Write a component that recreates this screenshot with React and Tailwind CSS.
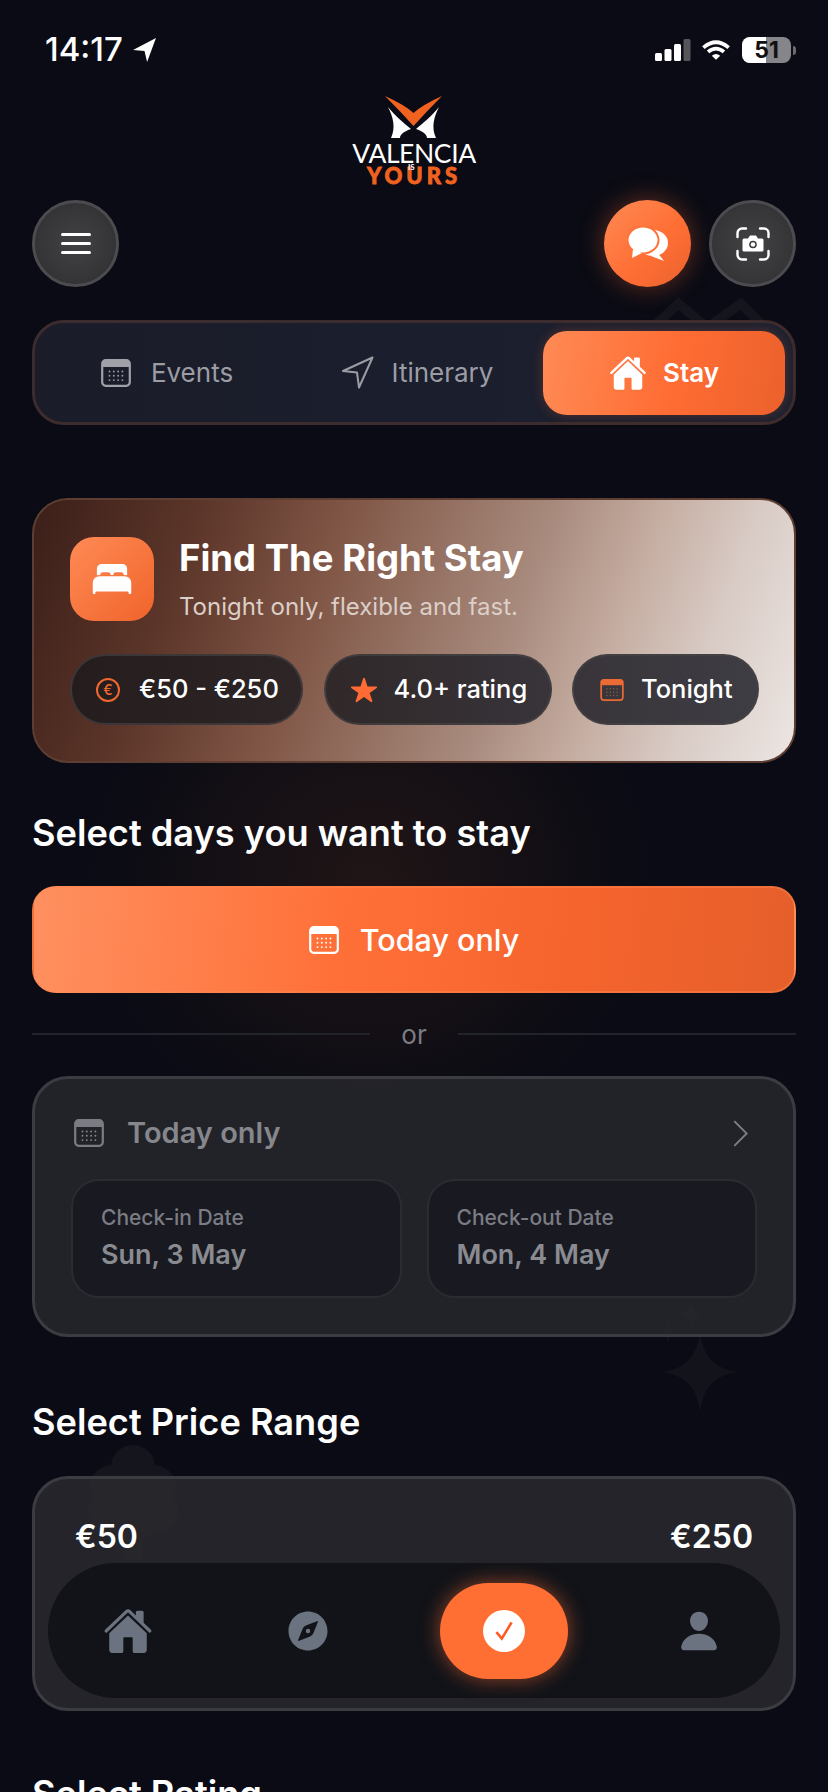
import React from "react";
import { IoHome, IoBed, IoCompass, IoPerson, IoStar } from "react-icons/io5";

const Calendar = ({ className = "", dot = "#888", body = "currentColor" }) => (
  <svg viewBox="0 0 30 28" className={className} fill="none">
    <rect x="1.200" y="1.200" width="27.600" height="25.600" rx="3.500" stroke={body} strokeWidth="2.200" />
    <path d="M1.200 8V4.700A3.500 3.500 0 0 1 4.700 1.200h20.600a3.500 3.500 0 0 1 3.500 3.500V8z" fill={body} />
    {[12.5, 16.8, 21.1].map((y) =>
      [8, 12.3, 16.6, 20.9].map((x) => <circle key={x + "-" + y} cx={x + 0.5} cy={y} r="0.95" fill={dot} />)
    )}
  </svg>
);

const Logo = () => (
  <div className="flex flex-col items-center h-[88px] -mt-[3px]">
    <svg viewBox="384 95 60 46" className="w-[60px] h-[46px] shrink-0">
      <path d="M385 97Q405 106 413.500 114Q422 106 442 97Q427 112 413.500 127Q400 112 385 97Z" fill="#f0621f" />
      <path d="M388 108C396 118 404 124 411 130C405 132 400 135 400 139L391 139C396 128 393 118 388 108Z" fill="#fff" />
      <path d="M439 108C431 118 423 124 416 130C422 132 427 135 427 139L436 139C431 128 434 118 439 108Z" fill="#fff" />
    </svg>
    <div className="relative h-[42px] w-[130px] text-center font-['Lato',sans-serif]">
      <div className="text-white text-[26.500px] leading-[25px] tracking-[-0.4px] font-normal whitespace-nowrap mt-[1px]">VALENCIA</div>
      <div className="text-[#f0621f] text-[22px] leading-[18px] tracking-[4px] font-black whitespace-nowrap mt-[1px] [-webkit-text-stroke:0.8px_#f0621f]">YOURS</div>
      <div className="absolute left-[59px] top-[23px] text-white text-[8px] leading-[8px] font-bold">IS</div>
    </div>
  </div>
);

const RoundBtn = ({ children, className = "" }) => (
  <button className={"w-[87px] h-[87px] rounded-full flex items-center justify-center " + className}>{children}</button>
);

const Title = ({ children, className = "" }) => (
  <h2 className={"text-white text-[36.200px] leading-[44px] font-semibold " + className}>{children}</h2>
);

const Chip = ({ icon, label, className = "" }) => (
  <div className={"h-[71px] rounded-full flex items-center border-2 border-[#4a4648]/60 text-white text-[25.500px] font-medium " + className}>
    {icon}
    <span>{label}</span>
  </div>
);

const DateBox = ({ label, value }) => (
  <div className="flex-1 h-[119px] rounded-[28px] bg-[#181921] border-2 border-[#2b2c32] pl-[28px] pt-[22px]">
    <div className="text-[#7b7c84] text-[21px] leading-[30px] font-medium">{label}</div>
    <div className="text-[#8a8b91] text-[27px] leading-[38px] mt-[3px] font-semibold">{value}</div>
  </div>
);

export default function App() {
  return (
    <div className="relative w-[828px] h-[1792px] overflow-hidden bg-[#0a0b14] font-['Inter',sans-serif]">
      {/* ambient decoration */}
      <div className="absolute left-[90px] top-[620px] w-[560px] h-[520px] rounded-full bg-[radial-gradient(closest-side,rgba(120,60,30,0.2),rgba(120,60,30,0))]" />
      <svg viewBox="0 0 110 40" className="absolute left-[640px] top-[294px] w-[132px] h-[48px]" fill="none" stroke="#14151d" strokeWidth="8">
        <path d="M4 34L32 8L56 28L84 8L106 30" />
      </svg>
      <svg viewBox="660 1300 82 112" className="absolute left-[660px] top-[1300px] w-[82px] h-[112px]" fill="#13141b">
        <path d="M700 1332Q704 1368 738 1372Q704 1376 700 1412Q696 1376 662 1372Q696 1368 700 1332Z" />
        <path d="M691 1300Q693 1312 701 1314Q693 1316 691 1328Q689 1316 681 1314Q689 1312 691 1300Z" />
        <path d="M668 1320Q669 1330 675 1332Q669 1334 668 1344Q667 1334 661 1332Q667 1330 668 1320Z" />
      </svg>
      <svg viewBox="0 0 90 115" className="absolute left-[88px] top-[1445px] w-[90px] h-[115px]" fill="#15161d">
        <circle cx="45" cy="22" r="22" /><circle cx="24" cy="42" r="22" /><circle cx="66" cy="42" r="22" /><circle cx="22" cy="66" r="22" /><circle cx="68" cy="66" r="22" /><circle cx="45" cy="70" r="26" />
        <rect x="36" y="80" width="18" height="35" />
      </svg>
      <div className="absolute left-[58px] top-[505px] w-[58px] h-[80px] rounded-full bg-[#000]/10" />

      {/* content */}
      <div className="relative px-[32px]">
        {/* status bar */}
        <div className="h-[97px] relative">
          <div className="absolute left-[13px] top-[30px] flex items-center gap-[9px] text-white text-[33px] leading-[38px] font-medium">
            <span>14:17</span>
            <svg viewBox="0 0 24 24" className="w-[25px] h-[25px]" fill="#fff"><path d="M23 1L1 12.500L12 13.500L14.500 24Z" /></svg>
          </div>
          <div className="absolute right-[0px] top-[37px] flex items-center">
            <svg viewBox="0 0 38 24" className="w-[38px] h-[24px]">
              <rect x="1" y="15" width="7" height="8" rx="1.500" fill="#fff" />
              <rect x="10.500" y="11" width="7" height="12" rx="1.500" fill="#fff" />
              <rect x="20" y="6" width="7" height="17" rx="1.500" fill="#fff" />
              <rect x="29.500" y="1" width="7" height="22" rx="1.500" fill="#55555a" />
            </svg>
            <svg viewBox="0 0 32 24" className="w-[30px] h-[24px] ml-[9px]" fill="none" stroke="#fff" strokeWidth="4">
              <path d="M2.500 9.500Q16 -2 29.500 9.500" />
              <path d="M7.500 14Q16 7 24.500 14" />
              <path d="M16 22.500L11.500 18Q16 14.500 20.500 18Z" fill="#fff" stroke="none" />
            </svg>
            <div className="relative ml-[11px] w-[49px] h-[26px] rounded-[8px] bg-[#85858a] text-[#111] text-[23px] leading-[26px] font-bold text-center">
              <div className="absolute left-0 top-0 w-[24px] h-full rounded-l-[8px] bg-white" />
              <span className="relative">51</span>
            </div>
            <div className="w-[3px] h-[9px] ml-[2px] rounded-r-full bg-[#6a6a6e]" />
          </div>
        </div>

        <Logo />

        {/* top actions */}
        <div className="flex items-center mt-[18px]">
          <RoundBtn className="bg-[radial-gradient(circle,#424244_0%,#353537_65%,#29292b_100%)] border-[3px] border-[#4c4c50]">
            <svg viewBox="0 0 30 22" className="w-[30px] h-[22px]" fill="#fff">
              <rect y="0" width="30" height="3" rx="1.500" /><rect y="9" width="30" height="3" rx="1.500" /><rect y="18" width="30" height="3" rx="1.500" />
            </svg>
          </RoundBtn>
          <RoundBtn className="ml-auto bg-[linear-gradient(135deg,#ff8a55,#ff6f35_55%,#ea622d)] shadow-[0_0_26px_rgba(255,107,53,0.38)]">
            <svg viewBox="0 0 42 36" className="w-[42px] h-[36px]" fill="#fff">
              <ellipse cx="26" cy="17" rx="15" ry="13" />
              <path d="M30 26L37 35L24 30Z" />
              <g stroke="#ff7238" strokeWidth="2">
                <ellipse cx="16" cy="14" rx="15.500" ry="13.500" />
              </g>
              <path d="M6 23L5 32L15 27Z" />
            </svg>
          </RoundBtn>
          <RoundBtn className="ml-[18px] bg-[radial-gradient(circle,#424244_0%,#363638_65%,#29292b_100%)] border-[3px] border-[#4c4c50]">
            <svg viewBox="0 0 34 34" className="w-[34px] h-[34px]" fill="none">
              <path d="M1.500 10V6a4.500 4.500 0 0 1 4.500-4.500h4M24 1.500h4A4.500 4.500 0 0 1 32.500 6v4M32.500 24v4a4.500 4.500 0 0 1-4.500 4.500h-4M10 32.500H6A4.500 4.500 0 0 1 1.500 28v-4" stroke="#fff" strokeWidth="2.400" strokeLinecap="round" />
              <path d="M8 11.500h4l2-3h6l2 3h4a1.500 1.500 0 0 1 1.500 1.500v10a1.500 1.500 0 0 1-1.500 1.500H8A1.500 1.500 0 0 1 6.500 23V13A1.500 1.500 0 0 1 8 11.500z" fill="#fff" />
              <circle cx="17" cy="17.500" r="3.800" fill="#3a3a3c" /><circle cx="17" cy="17.500" r="2.300" fill="#fff" />
            </svg>
          </RoundBtn>
        </div>

        {/* tabs */}
        <div className="mt-[33px] h-[105px] rounded-[32px] border-[3px] border-[#3d2c2d] bg-[linear-gradient(90deg,#1a1c29,#1c2030)] flex items-center p-[8px]">
          <div className="w-[248px] flex items-center justify-center gap-[20px] text-[#9c9da4] text-[26px] font-normal shrink-0">
            <Calendar className="w-[30px] h-[28px]" body="#a0a1a8" dot="#9a9ba2" />
            <span>Events</span>
          </div>
          <div className="flex-1 flex items-center justify-center gap-[18px] text-[#9c9da4] text-[26px] font-normal">
            <svg viewBox="0 0 33 33" className="w-[33px] h-[33px]" fill="none" stroke="#9c9da4" strokeWidth="2" strokeLinejoin="round"><path d="M31.500 1.500L2 15L16 16.500L18 31.500Z" /></svg>
            <span>Itinerary</span>
          </div>
          <div className="w-[242px] h-[84px] rounded-[24px] bg-[linear-gradient(100deg,#ff8a55,#ff6c33_55%,#eb612c)] flex items-center justify-center gap-[16px] text-white text-[26px] font-semibold shadow-[0_0_12px_rgba(255,107,53,0.25)] shrink-0">
            <IoHome className="w-[38px] h-[38px]" />
            <span>Stay</span>
          </div>
        </div>

        {/* hero */}
        <div className="mt-[73px] h-[265px] rounded-[36px] border-2 border-[#5e3e32] bg-[linear-gradient(110deg,#3b1f19_0%,#5a3428_19%,#805646_37%,#a98c7f_62%,#c4ab9f_73%,#d8cac4_85%,#ece6e3_100%)] pl-[36px] pr-[35px] pt-[37px]">
          <div className="flex">
            <div className="w-[84px] h-[84px] rounded-[24px] bg-[linear-gradient(135deg,#ff8a55,#f0642b)] flex items-center justify-center shrink-0">
              <IoBed className="w-[44px] h-[44px] text-white" />
            </div>
            <div className="ml-[25px]">
              <div className="text-white text-[36.500px] leading-[44px] font-bold -mt-[1px]">Find The Right Stay</div>
              <div className="text-[#dccfc8] text-[24px] leading-[30px] mt-[12px] font-normal">Tonight only, flexible and fast.</div>
            </div>
          </div>
          <div className="flex mt-[32px] justify-between">
            <Chip className="w-[233px] pl-[24px] bg-[linear-gradient(90deg,#251c1d,#2e2526)]" label="€50 - €250"
              icon={<span className="w-[24px] h-[24px] rounded-full border-2 border-[#f0682f] text-[#f0682f] text-[14px] leading-[20px] text-center mr-[19px]">€</span>} />
            <Chip className="w-[228px] pl-[24px] bg-[linear-gradient(90deg,#302829,#38343a)]" label="4.0+ rating"
              icon={<IoStar className="w-[28px] h-[28px] text-[#ff6b35] mr-[16px]" />} />
            <Chip className="w-[187px] pl-[26px] bg-[linear-gradient(90deg,#38343a,#3e3d43)]" label="Tonight"
              icon={<Calendar className="w-[24px] h-[22px] mr-[17px]" body="#ec6a33" dot="#8a5a44" />} />
          </div>
        </div>

        <Title className="mt-[48px]">Select days you want to stay</Title>

        {/* primary */}
        <button className="mt-[31px] w-full h-[107px] rounded-[24px] border-2 border-[#ff8a55]/40 bg-[linear-gradient(95deg,#ff9060,#ff7038_40%,#f6642d_70%,#e55f2b)] flex items-center justify-center gap-[21px] text-white text-[30.500px] font-medium">
          <Calendar className="w-[30px] h-[28px]" body="#fff" dot="#fff" />
          <span>Today only</span>
        </button>

        {/* or */}
        <div className="flex items-center mt-[23px] h-[36px]">
          <div className="flex-1 h-[2px] bg-[#22242c]" />
          <div className="w-[88px] text-center text-[#7b7c84] text-[26px]">or</div>
          <div className="flex-1 h-[2px] bg-[#22242c]" />
        </div>

        {/* date card */}
        <div className="mt-[24px] h-[261px] rounded-[36px] border-[3px] border-[#3b3c42] bg-[#28292e]/80 px-[37px] pt-[34px]">
          <div className="flex items-center h-[40px] text-[#86878d]">
            <Calendar className="w-[30px] h-[28px] ml-[2px]" body="#7b7c83" dot="#85868c" />
            <span className="ml-[23px] text-[29px] font-semibold">Today only</span>
            <svg viewBox="0 0 14 26" className="w-[15px] h-[27px] ml-auto mr-[8px]" fill="none" stroke="#7e7f86" strokeWidth="1.800"><path d="M1 1l12 12L1 25" /></svg>
          </div>
          <div className="flex gap-[25px] mt-[26px] -mx-[1px]">
            <DateBox label="Check-in Date" value="Sun, 3 May" />
            <DateBox label="Check-out Date" value="Mon, 4 May" />
          </div>
        </div>

        <Title className="mt-[63px]">Select Price Range</Title>

        {/* price card */}
        <div className="mt-[32px] h-[235px] rounded-[36px] border-[3px] border-[#3b3c42] bg-[#2a2b30]/80 px-[40px] pt-[38px]">
          <div className="flex justify-between text-white text-[32px] leading-[40px] font-semibold">
            <span>€50</span><span>€250</span>
          </div>
        </div>

        <Title className="mt-[61px]">Select Rating</Title>
      </div>

      {/* bottom nav */}
      <div className="absolute left-[48px] top-[1563px] w-[732px] h-[135px] rounded-[68px] bg-[#111318] flex items-center">
        <div className="w-[160px] flex justify-center"><IoHome className="w-[50px] h-[50px] text-[#6b7280]" /></div>
        <div className="w-[200px] flex justify-center"><IoCompass className="w-[48px] h-[48px] text-[#6b7280]" /></div>
        <div className="w-[128px] h-[96px] ml-[32px] rounded-[48px] bg-[#ff6f33] shadow-[0_0_20px_rgba(255,107,53,0.55)] flex items-center justify-center">
          <span className="w-[42px] h-[42px] rounded-full bg-white flex items-center justify-center">
            <svg viewBox="0 0 24 24" className="w-[26px] h-[26px]" fill="none" stroke="#ff5a24" strokeWidth="2.400"><path d="M5 13l5 6L19 4" /></svg>
          </span>
        </div>
        <div className="w-[100px] ml-[81px] flex justify-center"><IoPerson className="w-[44px] h-[44px] text-[#6b7280]" /></div>
      </div>
    </div>
  );
}
